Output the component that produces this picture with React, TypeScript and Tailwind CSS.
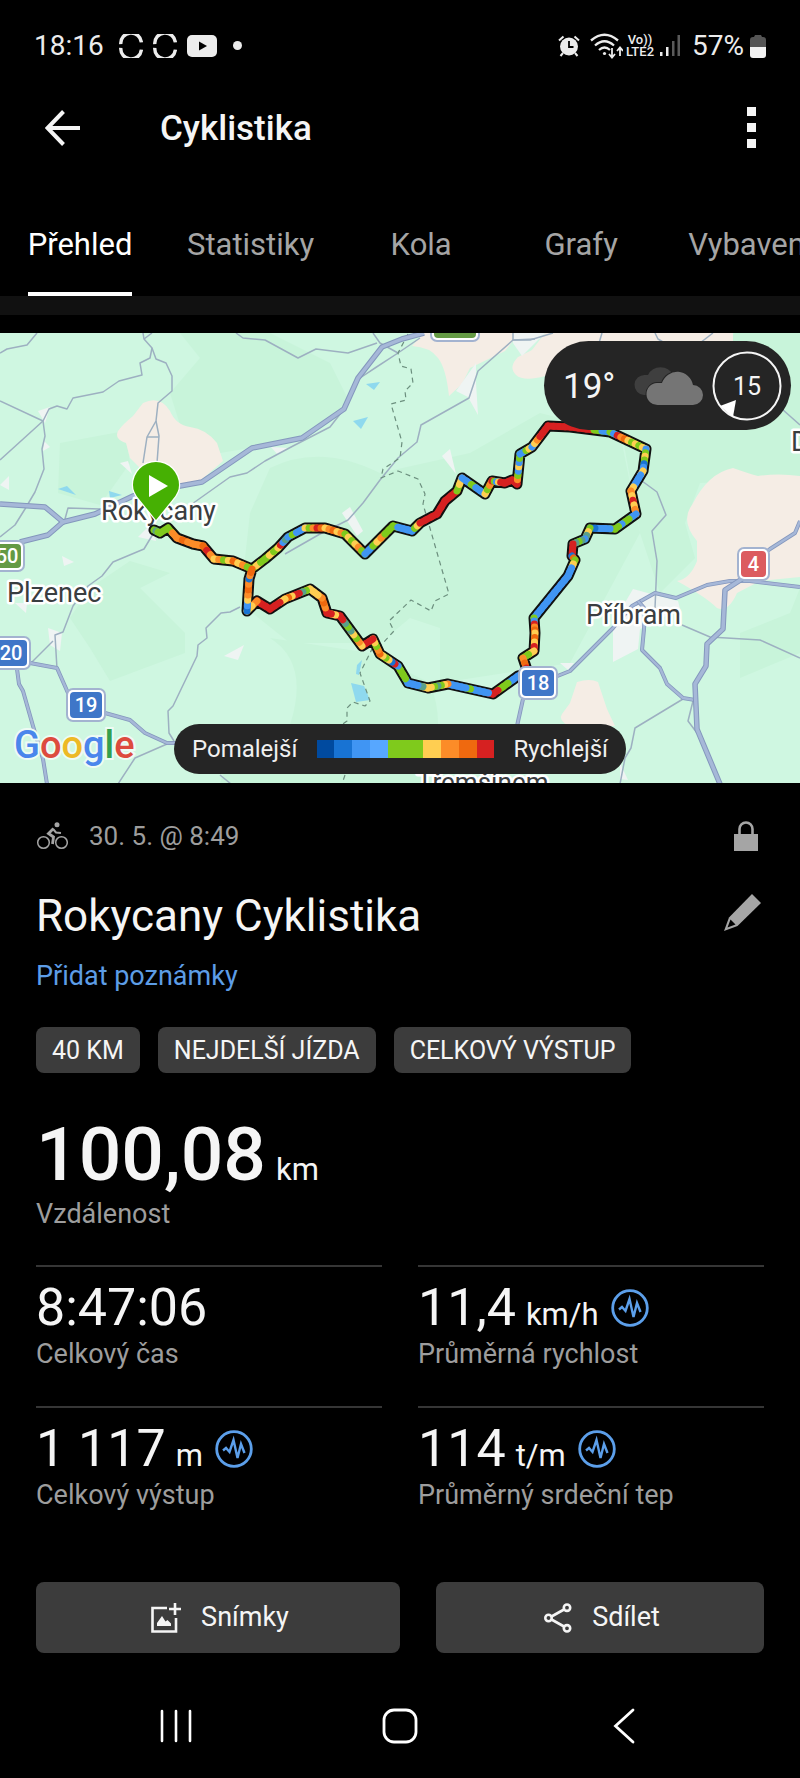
import { Fragment, type ReactNode } from 'react';

const tabs = ['Přehled', 'Statistiky', 'Kola', 'Grafy', 'Vybavení'];

const badges = ['40 KM', 'NEJDELŠÍ JÍZDA', 'CELKOVÝ VÝSTUP'];

const stats = [
  { value: '8:47:06', label: 'Celkový čas' },
  { value: '11,4', unit: 'km/h', label: 'Průměrná rychlost', chart: true },
  { value: '1 117', unit: 'm', label: 'Celkový výstup', chart: true },
  { value: '114', unit: 't/m', label: 'Průměrný srdeční tep', chart: true },
];

const speedColors: Record<string, string> = {
  d: '#1873d3',
  b: '#4095f3',
  t: '#5aa08a',
  g: '#7fca1c',
  y: '#ffce51',
  o: '#fc8c28',
  e: '#ef690f',
  r: '#d62121',
};

// x, y and the speeds on the way to the next point
type RoutePoint = [number, number, string];

const route: RoutePoint[] = [
  [154, 197, 'gtg'],
  [160, 200, 'g'],
  [168, 195, 'go'],
  [177, 205, 'oeo'],
  [193, 211, 'oo'],
  [203, 213, 'ero'],
  [214, 226, 'yogy'],
  [233, 228, 'eyog'],
  [252, 236, 'gyg'],
  [265, 226, 'gyg'],
  [278, 215, 'yrbt'],
  [288, 204, 'bgbb'],
  [305, 195, 'ygore'],
  [325, 195, 'yoeyo'],
  [345, 201, 'gygyog'],
  [365, 221, 'bbgyogg'],
  [393, 193, 'gbbb'],
  [412, 198, 'bgy'],
  [420, 190, 'rrr'],
  [437, 181, 'rr'],
  [445, 168, 'rr'],
  [457, 158, 'gy'],
  [462, 145, 'bbgbb'],
  [485, 161, 'ygo'],
  [492, 148, 'rgbyrr'],
  [505, 150, 'rr'],
  [512, 147, 'rr'],
  [517, 151, 'rogbybg'],
  [520, 121, 'bbgy'],
  [532, 114, 'byorrr'],
  [548, 93, 'rrrr'],
  [570, 94, 'rrrgb'],
  [610, 99, 'gbroeygygy'],
  [646, 116, 'bgygdb'],
  [643, 138, 'ybbby'],
  [631, 158, 'oyryo'],
  [636, 181, 'bbggbg'],
  [615, 196, 'gbbbd'],
  [590, 195, 'gyt'],
  [585, 206, 'btgt'],
  [573, 211, 'rrr'],
  [572, 223, 'de'],
  [575, 227, 'gybb'],
  [568, 243, 'bbbbbbbbbb'],
  [534, 285, 'gbroe'],
  [535, 300, 'yeyr'],
  [534, 318, 'yg'],
  [523, 325, 'oer'],
  [528, 340, 'b'],
  [518, 343, 'bbggr'],
  [493, 361, 'rbbbbgbbbb'],
  [448, 351, 'oygtgy'],
  [428, 355, 'ytbb'],
  [408, 350, 'bggg'],
  [398, 333, 'brdygy'],
  [380, 321, 'eogy'],
  [373, 306, 'rrr'],
  [362, 313, 'yogytgtr'],
  [340, 283, 'ryr'],
  [327, 280, 'roe'],
  [322, 265, 'oyy'],
  [310, 256, 'ygtrrye'],
  [285, 266, 'yrr'],
  [270, 276, 'rrr'],
  [257, 268, 'oy'],
  [247, 278, 'dbyoeo'],
  [249, 246, 'doe'],
  [252, 236, 'o'],
];

const routeSegments = route.slice(0, -1).flatMap(([x, y, speeds], i) => {
  const [nx, ny] = route[i + 1];
  return speeds.split('').map((speed, n) => ({
    x1: x + ((nx - x) * n) / speeds.length,
    y1: y + ((ny - y) * n) / speeds.length,
    x2: x + ((nx - x) * (n + 1)) / speeds.length,
    y2: y + ((ny - y) * (n + 1)) / speeds.length,
    color: speedColors[speed],
  }));
});

const routeLine = route.map(([x, y]) => `${x},${y}`).join(' ');

const paths = [
  '0,20 7,16 27,12 37,0',
  '143,0 144,6 152,15 150,25 140,30 142,42 119,48 103,59 73,65 67,76 57,73 49,76 43,88 0,127',
  '144,6 152,0',
  '0,68 43,88 45,103 42,116 44,136 35,159 25,176 15,192 0,204',
  '152,15 156,26 166,30 172,43 172,58 158,70 156,88 147,104 143,130',
  '156,88 159,103 157,130',
  '147,104 159,104',
  '236,0 243,5 265,7 298,25 316,16 348,20 377,10',
  '373,0 380,10 398,20',
  '420,5 398,20 375,35 360,45',
  '65,186 68,175 100,176',
  '344,76 330,94 293,113 265,128 247,140 230,144 192,171',
  '153,201 144,216 113,229 102,243 88,253 73,273 63,299 55,302 57,336',
  '53,308 32,329',
  '167,411 135,425 118,451',
  '240,274 230,279 221,280 206,295 207,305 198,312 197,323 173,373 168,378 169,400 174,408',
  '220,442 231,451',
  '535,6 513,7 478,38 469,65 421,92 417,109 398,125 380,147 363,170 348,187 320,201 285,221',
  '513,7 513,0',
  '513,7 530,7 553,0',
  '602,0 599,10',
  '655,0 658,6 663,9',
  '713,0 700,10',
  '782,76 800,92',
  '642,148 657,159 666,182 652,198 657,228 655,275',
  '682,292 710,304 760,307 800,325',
  '683,366 635,395 631,415 625,425 620,451',
  '693,368 688,388 697,400',
];

const highways = [
  '48,202 20,209',
  '30,330 57,335 68,360 83,373 105,380 130,387 145,400 167,410 176,410',
  '17,336 19,351 23,358 33,393 43,426 47,451',
  '800,188 795,200 770,216 753,230',
  '800,254 750,248 730,248 707,252 676,265 655,260 632,273 613,295 570,338 550,346',
  '638,268 645,276 644,296 642,317 660,335 667,351 683,365 695,367',
  '523,366 517,393',
];

const motorways = [
  '0,171 45,174 63,189 95,181 133,163 180,153 202,149 252,115 302,105 344,76 358,45 382,14 402,6 424,0',
  '63,189 48,202 20,209',
  '745,244 725,257 723,296 707,311 706,333 695,351 697,396 720,451',
];

const borders = [
  '408,1 398,20 401,33 411,36 413,50 405,58 406,67 391,71 402,109 400,125 383,136 381,145 398,138 418,146 425,161 423,171 438,223 449,261 435,268 431,278 411,267 389,288 394,298 382,311 372,316 360,340 370,368 365,373 353,369 347,375 347,388 340,393',
  '345,442 342,451',
];

function Shield({ x, y, w, h = 34, fill, children }: { x: number; y: number; w: number; h?: number; fill: string; children?: ReactNode }) {
  return (
    <g>
      <rect x={x} y={y} width={w} height={h} rx="7" fill="#a3b3d0" />
      <rect x={x + 2} y={y + 2} width={w - 4} height={h - 4} rx="5" fill="#fff" />
      <rect x={x + 4} y={y + 4} width={w - 8} height={h - 8} rx="4" fill={fill} />
      <text x={x + w / 2} y={y + h / 2 + 7} textAnchor="middle" fill="#fff" className="text-[20px] font-medium">
        {children}
      </text>
    </g>
  );
}

function RouteMap() {
  return (
    <svg viewBox="0 0 800 450" className="block h-auto w-full font-[Roboto,sans-serif]" aria-label="Mapa trasy">
      <rect width="800" height="450" fill="#cff7e1" />

      <g fill="#c8f4da">
        <path d="M180 0 L270 0 L330 30 L350 70 L300 105 L250 115 L220 120 L180 92 L170 60 L200 25Z" />
        <path d="M60 110 L125 98 L130 130 L100 172 L58 160Z" />
        <path d="M270 135 Q320 110 380 140 L470 120 L540 80 L620 100 L640 200 L570 330 L440 350 L440 295 L410 285 L380 310 L290 310 L240 270 L250 180Z" />
        <path d="M130 228 L170 240 L140 255 L185 300 L185 320 L110 348 L90 315 L70 285 L90 255Z" />
        <path d="M620 90 L735 0 L800 0 L800 145 L700 150 L685 190 L695 225 L660 260 L640 200Z" />
        <path d="M270 305 Q310 330 290 392 L240 400 L220 450 L420 450 Q450 400 430 350 L370 320Z" />
        <path d="M740 300 L790 280 L800 255 L800 320 L740 345Z" />
      </g>

      <g fill="#f5ede5">
        <path d="M143 70 Q160 62 170 78 Q176 92 190 94 Q206 96 217 110 L223 128 L200 148 L160 155 L130 125 L126 110 Q114 106 118 98 Q123 91 133 83Z" />
        <path d="M412 13 L424 0 L513 0 L513 8 L505 18 L470 35 L462 51 L449 63 Q446 35 438 25 Q430 14 412 13Z" />
        <path d="M545 0 L733 0 L733 40 L545 43 Q524 49 516 42 Q508 34 518 24 L532 17Z" />
        <path d="M733 135 Q747 140 758 143 Q778 140 800 143 L800 244 L760 248 L737 260 Q728 280 717 275 Q706 264 677 248 Q690 246 697 228 L697 208 Q680 188 692 172 Q708 140 733 135Z" />
        <path d="M577 349 Q590 345 598 349 L607 376 L615 393 L568 393 Q558 386 562 381 L570 370Z" />
      </g>

      <g fill="#eff4f3">
        <path d="M38 78 L50 74 L45 90Z" />
        <path d="M44 108 L50 114 L43 118Z" />
        <path d="M120 130 L128 128 L132 141Z" />
        <path d="M0 152 L9 143 L9 157Z" />
        <path d="M62 223 L74 229 L64 233Z" />
        <path d="M48 295 L62 300 L60 318 L50 312Z" />
        <path d="M224 323 L244 312 L238 327Z" />
        <path d="M342 180 L350 174 L363 198 L357 203Z" />
        <path d="M442 123 L450 116 L456 141Z" />
        <path d="M456 58 L476 30 L476 50 L478 82 L468 64Z" />
        <path d="M513 0 L545 0 L522 23 L513 10Z" />
        <path d="M613 290 L633 256 L655 262 L678 268 L680 276 L640 296 L638 316 L613 329Z" />
        <path d="M560 330 L574 330 L568 337Z" />
        <path d="M138 204 L152 190 L156 208Z" />
        <path d="M15 270 L27 270 L26 280Z" />
        <path d="M271 114 L288 115 L278 122Z" />
        <path d="M620 430 L628 447 L620 446Z" />
      </g>

      <g fill="#8fd9ee">
        <path d="M58 156 L67 153 L76 162Z" />
        <path d="M109 158 L122 162 L110 165Z" />
        <path d="M366 51 L380 49 L374 57Z" />
        <path d="M353 88 L368 84 L361 96Z" />
        <path d="M357 332 L362 327 L359 342 L356 341Z" />
        <path d="M351 350 L364 353 L370 367 L356 369Z" />
      </g>

      <g fill="none" strokeLinejoin="round">
        {paths.map((points) => (
          <polyline key={points} points={points} stroke="#9db0c1" strokeWidth="1.5" />
        ))}
        {borders.map((points) => (
          <polyline key={points} points={points} stroke="#6c8f7e" strokeWidth="1.2" strokeDasharray="5 4" />
        ))}
        {highways.map((points) => (
          <Fragment key={points}>
            <polyline points={points} stroke="#8497bd" strokeWidth="4" />
            <polyline points={points} stroke="#a6b8d8" strokeWidth="2.4" />
          </Fragment>
        ))}
        {motorways.map((points) => (
          <polyline key={points} points={points} stroke="#8497bd" strokeWidth="5.5" />
        ))}
        {motorways.map((points) => (
          <polyline key={points} points={points} stroke="#a6b8d8" strokeWidth="3.5" />
        ))}
      </g>

      <g className="text-[27px]" fill="#3a3d40" stroke="#fff" strokeWidth="5" strokeLinejoin="round" paintOrder="stroke">
        <text x="101" y="187">Rokycany</text>
        <text x="7" y="269">Plzenec</text>
        <text x="586" y="291">Příbram</text>
        <text x="791" y="118">D</text>
        <text x="417" y="458" className="text-[26px]">Třemšínem</text>
      </g>

      <polyline points={routeLine} fill="none" stroke="#111" strokeWidth="11" strokeLinejoin="round" strokeLinecap="round" />
      <g strokeWidth="7" strokeLinecap="round">
        {routeSegments.map(({ color, ...line }, i) => (
          <line key={i} {...line} stroke={color} />
        ))}
      </g>

      <Shield x={-11} y={207} w={36} h={32} fill="#649a44">50</Shield>
      <Shield x={-9} y={303} w={40} fill="#3f76c8">20</Shield>
      <Shield x={66} y={355} w={40} fill="#3f76c8">19</Shield>
      <Shield x={518} y={333} w={40} fill="#3f76c8">18</Shield>
      <Shield x={737} y={214} w={33} fill="#dc5b5f">4</Shield>
      <Shield x={430} y={-25} w={50} fill="#649a44" />

      <path
        d="M156 187 L139 166 Q133 159 133 152 A23 23 0 0 1 179 152 Q179 159 173 166Z"
        fill="#46b003"
        stroke="#fff"
        strokeWidth="2.5"
        paintOrder="stroke"
      />
      <path d="M149 142 L168 153 L149 164Z" fill="#fff" />

      <text x="14" y="425" className="text-[38px] font-medium" stroke="#eefbf4" strokeWidth="4" paintOrder="stroke">
        <tspan fill="#4a86ec">G</tspan>
        <tspan fill="#dd4b3e">o</tspan>
        <tspan fill="#edb926">o</tspan>
        <tspan fill="#4a86ec">g</tspan>
        <tspan fill="#34a04f">l</tspan>
        <tspan fill="#dd4b3e">e</tspan>
      </text>
    </svg>
  );
}

function WeatherPill() {
  return (
    <div className="absolute top-2 right-[9px] flex h-[89px] w-[247px] items-center rounded-full bg-[#252525] pr-[9px] pl-[19px] text-[#f5f5f5]">
      <span className="pt-1 text-[35px]">19°</span>
      <svg viewBox="0 0 70 40" className="ml-auto h-10 w-[70px]" aria-hidden="true">
        <path d="M11 29 a10 10 0 0 1 1-20 h3 a14 14 0 0 1 25 0 L30 29Z" fill="#3f3f3f" />
        <path
          d="M25 39 a11 11 0 0 1-1-22 h5 a16 16 0 0 1 31 2 a9.5 9.5 0 0 1 0 20Z"
          fill="#757575"
          stroke="#252525"
          strokeWidth="2"
          paintOrder="stroke"
        />
      </svg>
      <div className="relative ml-[9px] flex size-[70px] items-center justify-center">
        <svg viewBox="0 0 70 70" className="absolute inset-0" aria-hidden="true">
          <circle cx="35" cy="35" r="33.5" fill="none" stroke="#f5f5f5" strokeWidth="2" />
          <path d="M8 55 L24 49 L21 66Z" fill="#fff" />
        </svg>
        <span className="pt-0.5 text-[25px]">15</span>
      </div>
    </div>
  );
}

function Legend() {
  return (
    <div className="absolute bottom-[9px] left-1/2 flex h-[50px] w-[452px] -translate-x-1/2 items-center justify-between rounded-full bg-[#252525] px-[18px] text-[24px] text-[#f0f0f0]">
      <span>Pomalejší</span>
      <div className="grid h-[18px] w-[178px] grid-cols-10">
        <span className="bg-[#004a9f]" />
        <span className="bg-[#1873d3]" />
        <span className="bg-[#4095f3]" />
        <span className="bg-[#57a7ff]" />
        <span className="col-span-2 bg-[#7fca1c]" />
        <span className="bg-[#ffce51]" />
        <span className="bg-[#fc8c28]" />
        <span className="bg-[#ef690f]" />
        <span className="bg-[#d62121]" />
      </div>
      <span>Rychlejší</span>
    </div>
  );
}

function RingIcon() {
  return (
    <svg viewBox="0 0 24 24" className="size-6" fill="none" stroke="#ececec" strokeWidth="3.4" aria-hidden="true">
      <path d="M1.8 10.2 A10.3 10.3 0 0 1 22.4 8.4" />
      <path d="M1.8 13.8 A10.3 10.3 0 0 0 22.4 15.6" />
    </svg>
  );
}

function StatusBar() {
  return (
    <div className="flex h-[91px] items-center px-[34px] text-[28px] text-[#ececec]">
      <span>18:16</span>
      <div className="ml-[15px] flex items-center gap-[10px]">
        <RingIcon />
        <RingIcon />
        <svg viewBox="0 0 30 22" className="h-[22px] w-[30px]" aria-hidden="true">
          <rect width="30" height="22" rx="5" fill="#ececec" />
          <path d="M12 6.5 L20 11 L12 15.5Z" fill="#000" />
        </svg>
      </div>
      <span className="ml-4 size-[9px] rounded-full bg-[#ececec]" />

      <div className="ml-auto flex items-center">
        <svg viewBox="0 0 22 22" className="size-[22px]" aria-hidden="true">
          <path d="M1 5.5 L5.5 1.5 M21 5.5 L16.5 1.5 M5 18 L2.5 21 M17 18 L19.5 21" stroke="#ececec" strokeWidth="2" />
          <circle cx="11" cy="11.5" r="9" fill="#ececec" />
          <path d="M11 6 V12 H15.5" fill="none" stroke="#000" strokeWidth="1.8" />
        </svg>
        <svg viewBox="0 0 33 26" className="ml-[10px] h-[26px] w-[33px]" fill="none" stroke="#ececec" aria-hidden="true">
          <path d="M1 7.5 Q14.5 -4 28 7.5" strokeWidth="2.3" />
          <path d="M5 12.5 Q14.5 4 24 12.5" strokeWidth="2.3" />
          <path d="M9 17 Q14.5 12 20 17" strokeWidth="2.3" />
          <circle cx="14.5" cy="20.5" r="1.6" fill="#ececec" stroke="none" />
          <path d="M22 15 V24 M19 21 L22 24.5 L25 21 M30 23 V14.5 M27 18 L30 14.5 L33 18" strokeWidth="1.8" />
        </svg>
        <div className="ml-[3px] flex flex-col items-center text-[13px] leading-[12px] font-medium">
          <span>Vo))</span>
          <span>LTE2</span>
        </div>
        <svg viewBox="0 0 20 21" className="ml-[6px] h-[21px] w-5" aria-hidden="true">
          <rect y="17" width="2.5" height="4" fill="#ececec" />
          <rect x="6" y="12" width="2.5" height="9" fill="#ececec" />
          <rect x="12" y="6" width="2.5" height="15" fill="#5a5a5a" />
          <rect x="17.5" width="2.5" height="21" fill="#5a5a5a" />
        </svg>
        <span className="ml-3">57%</span>
        <svg viewBox="0 0 16 24" className="ml-[6px] h-6 w-4" aria-hidden="true">
          <path d="M0 13 V6 a3 3 0 0 1 3-3 h1 l1-2 h6 l1 2 h1 a3 3 0 0 1 3 3 v7Z" fill="#555" />
          <path d="M0 13 H16 V21 a3 3 0 0 1-3 3 H3 a3 3 0 0 1-3-3Z" fill="#f2f2f2" />
        </svg>
      </div>
    </div>
  );
}

function ChartButton({ label }: { label: string }) {
  return (
    <button type="button" aria-label={`Graf: ${label}`} className="ml-3">
      <svg viewBox="0 0 38 38" className="size-[38px]" fill="none" stroke="#5c9fea" strokeWidth="2.8">
        <circle cx="19" cy="19" r="17.3" />
        <path d="M8 20.5 L11 18 L14.5 22 L18.5 10 L22.5 28 L26 14 L29.5 23" strokeWidth="2.4" />
      </svg>
    </button>
  );
}

export default function App() {
  return (
    <main className="min-h-screen overflow-x-hidden bg-black font-[Roboto,sans-serif] text-[#f5f5f5]">
      <StatusBar />

      <header className="flex h-[73px] items-center pr-11 pl-[45px]">
        <button type="button" aria-label="Zpět">
          <svg viewBox="0 0 36 36" className="size-9" fill="none" stroke="#f5f5f5" strokeWidth="4">
            <path d="M35 18 H3 M18.5 1.5 L2.5 18 L18.5 34.5" />
          </svg>
        </button>
        <h1 className="ml-[79px] pt-1 text-[35px] font-medium">Cyklistika</h1>
        <button type="button" aria-label="Další možnosti" className="ml-auto flex flex-col gap-[7px]">
          <span className="size-[9px] bg-[#f5f5f5]" />
          <span className="size-[9px] bg-[#f5f5f5]" />
          <span className="size-[9px] bg-[#f5f5f5]" />
        </button>
      </header>

      <nav className="mt-[26px] flex h-[106px] overflow-hidden text-[31px] whitespace-nowrap">
        {tabs.map((tab, i) => (
          <button
            key={tab}
            type="button"
            aria-current={i === 0 ? 'page' : undefined}
            className={i === 0 ? 'flex min-w-40 shrink-0 justify-center px-[27px] text-white' : 'flex min-w-40 shrink-0 justify-center px-[27px] text-[#a5a5a5]'}
          >
            <span className={i === 0 ? 'flex h-full items-center border-b-4 border-white pt-2' : 'flex h-full items-center border-b-4 border-transparent pt-2'}>{tab}</span>
          </button>
        ))}
      </nav>
      <div className="mb-[18px] h-[19px] bg-[#111]" />

      <section className="relative">
        <RouteMap />
        <WeatherPill />
        <Legend />
      </section>

      <section className="px-9 pt-[33px]">
        <div className="flex h-10 items-center text-[26px] text-[#9d9d9d]">
          <svg viewBox="0 0 32 28" className="h-7 w-8" fill="none" stroke="#a5a5a5" aria-hidden="true">
            <circle cx="7.5" cy="20.5" r="5.8" strokeWidth="1.5" />
            <circle cx="25.5" cy="20.5" r="5.8" strokeWidth="1.5" />
            <circle cx="21" cy="2.8" r="2.5" fill="#a5a5a5" stroke="none" />
            <path d="M17.5 6.5 L12.5 11.5 L17.5 15 L16.5 22" strokeWidth="2.8" />
            <path d="M17 7 L20 10.5 L25 11" strokeWidth="2" />
          </svg>
          <span className="ml-[21px]">30. 5. @ 8:49</span>
          <svg viewBox="0 0 24 30" className="mr-[6px] ml-auto h-[30px] w-6" aria-label="Soukromé">
            <path d="M0 13 H24 V30 H0Z" fill="#a5a5a5" />
            <path d="M5.5 14 V8 a6.5 6.5 0 0 1 13 0 V14" fill="none" stroke="#a5a5a5" strokeWidth="2.6" />
          </svg>
        </div>

        <div className="mt-8 flex h-14 items-center justify-between">
          <h2 className="text-[44px]">Rokycany Cyklistika</h2>
          <button type="button" aria-label="Upravit název" className="mr-[3px] mb-2">
            <svg viewBox="0 0 37 37" className="size-[37px]">
              <path d="M28 0 L37 9 L13.5 32 L0 37 L5 23.5Z" fill="#a5a5a5" />
              <path d="M6.5 25.5 L11.5 30.5 L3.5 33.5Z" fill="#000" />
            </svg>
          </button>
        </div>

        <a href="#poznamky" className="mt-[14px] inline-block text-[27px] leading-9 text-[#5d9de6]">
          Přidat poznámky
        </a>

        <ul className="mt-[33px] flex flex-wrap gap-[18px]">
          {badges.map((badge) => (
            <li key={badge} className="flex h-[46px] items-center rounded-lg bg-[#3c3c3c] px-4 pt-0.5 text-[25px]">
              {badge}
            </li>
          ))}
        </ul>

        <div className="mt-9">
          <div className="flex h-[87px] items-baseline gap-[10px] leading-[90px]">
            <span className="text-[75px] font-medium">100,08</span>
            <span className="text-[31px]">km</span>
          </div>
          <div className="text-[27px] leading-9 text-[#9d9d9d]">Vzdálenost</div>
        </div>

        <div className="mt-[33px] grid grid-cols-2 gap-x-9">
          {stats.map((stat) => (
            <div key={stat.label} className="h-[141px] border-t-2 border-[#363636] pt-[13px]">
              <div className="flex h-14 items-center">
                <div className="flex items-baseline gap-[10px]">
                  <span className="text-[52px] leading-[56px]">{stat.value}</span>
                  {stat.unit && <span className="text-[31px] leading-none">{stat.unit}</span>}
                </div>
                {stat.chart && <ChartButton label={stat.label} />}
              </div>
              <div className="text-[27px] leading-9 text-[#9d9d9d]">{stat.label}</div>
            </div>
          ))}
        </div>

        <div className="mt-[35px] flex gap-9 text-[27px]">
          <button type="button" className="flex h-[71px] w-1/2 shrink-0 items-center justify-center gap-5 rounded-lg bg-[#3c3c3c] pl-1">
            <svg viewBox="0 0 30 30" className="size-[30px]" aria-hidden="true">
              <path d="M16 5 H1.5 V28.5 H25 V15" fill="none" stroke="#f5f5f5" strokeWidth="2.6" />
              <path d="M24 0 V12 M18 6 H30" stroke="#f5f5f5" strokeWidth="2.6" />
              <path d="M6 23 V20 L11 13 L14.5 18.5 L16.5 17 L20 20.5 V23Z" fill="#f5f5f5" />
            </svg>
            Snímky
          </button>
          <button type="button" className="flex h-[71px] flex-1 items-center justify-center gap-5 rounded-lg bg-[#3c3c3c] pl-1">
            <svg viewBox="0 0 28 30" className="h-[30px] w-7" fill="none" stroke="#f5f5f5" strokeWidth="2.6" aria-hidden="true">
              <circle cx="4.5" cy="15" r="3.2" />
              <circle cx="23" cy="4.7" r="3.2" />
              <circle cx="23" cy="25.3" r="3.2" />
              <path d="M7.5 13.5 L20 6.5 M7.5 16.5 L20 23.5" />
            </svg>
            Sdílet
          </button>
        </div>
      </section>

      <nav className="mt-[37px] grid h-[72px] grid-cols-3 items-center justify-items-center px-16" aria-label="Systémová navigace">
        <button type="button" aria-label="Poslední aplikace">
          <svg viewBox="0 0 34 34" className="size-[34px]" stroke="#fff" strokeWidth="2.6" strokeLinecap="round">
            <path d="M3 2 V32 M17 2 V32 M31 2 V32" />
          </svg>
        </button>
        <button type="button" aria-label="Domů">
          <svg viewBox="0 0 36 36" className="size-9" fill="none" stroke="#fff" strokeWidth="2.8">
            <rect x="2" y="2" width="32" height="32" rx="10" />
          </svg>
        </button>
        <button type="button" aria-label="Zpět o krok">
          <svg viewBox="0 0 22 36" className="h-9 w-[22px]" fill="none" stroke="#fff" strokeWidth="2.8" strokeLinecap="round">
            <path d="M20 2 L2.5 18 L20 34" />
          </svg>
        </button>
      </nav>
    </main>
  );
}
